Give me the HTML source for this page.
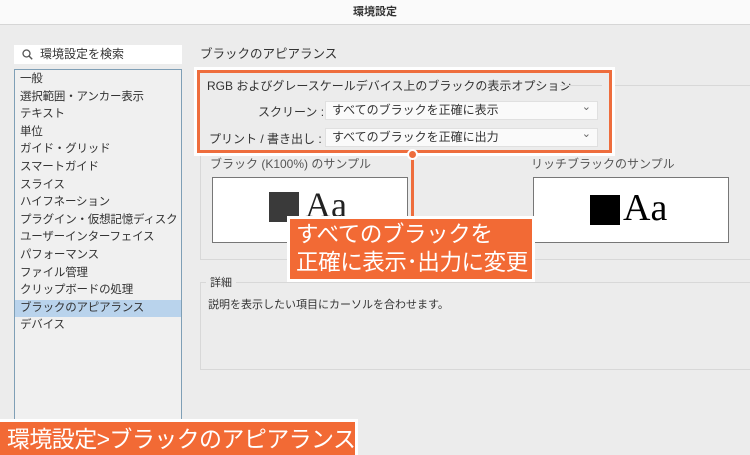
<!DOCTYPE html>
<html><head><meta charset="utf-8"><style>
*{margin:0;padding:0;box-sizing:border-box}
html,body{width:750px;height:455px;overflow:hidden}
body{background:#ececec;font-family:"Liberation Sans","Noto Sans CJK JP",sans-serif;color:#333;position:relative;font-size:12px}
.a{position:absolute;white-space:nowrap}
.title{left:0;top:0;width:750px;height:25px;background:#fafafa;border-bottom:1px solid #d6d6d6;text-align:center;line-height:25px;font-size:11px;font-weight:bold;color:#333}
.search{left:14px;top:45px;width:168px;height:19px;background:#fff;font-size:12px;line-height:19px;padding-left:26px;color:#333}
.list{left:14px;top:69px;width:168px;height:360px;background:#f0f0f0;border:1px solid #7f9fb6;overflow:hidden}
.list div{height:17.6px;line-height:17.6px;padding-left:5px;font-size:11.5px;color:#333;white-space:nowrap;letter-spacing:-0.2px}
.sel{background:#b9d3ec}
.grp{border:1px solid #d8d8d8;}
.dd{background:#fafafa;border:1px solid #e0e0e0;height:19px;line-height:17px;padding-left:6px;font-size:12px}
.dd:after{content:"⌄";position:absolute;right:6px;top:-3px;font-size:11px;color:#666}
.samp{background:#fff;border:1px solid #777}
.callout{background:#f26a35;color:#fff;border:3px solid #fff;font-size:22.5px;line-height:28px;padding-left:6px;letter-spacing:-0.4px;overflow:hidden}
</style></head><body>
<div class="a title">環境設定</div>
<div class="a search"><svg class="a" style="left:8px;top:4px" width="11" height="11" viewBox="0 0 11 11"><circle cx="4.5" cy="4.5" r="3.5" fill="none" stroke="#555" stroke-width="1.3"/><path d="M7 7l3.2 3.2" stroke="#555" stroke-width="1.4"/></svg>環境設定を検索</div>
<div class="a list" style="padding-top:1px">
<div>一般</div><div>選択範囲・アンカー表示</div><div>テキスト</div><div>単位</div><div>ガイド・グリッド</div><div>スマートガイド</div><div>スライス</div><div>ハイフネーション</div><div>プラグイン・仮想記憶ディスク</div><div>ユーザーインターフェイス</div><div>パフォーマンス</div><div>ファイル管理</div><div>クリップボードの処理</div><div class="sel">ブラックのアピアランス</div><div>デバイス</div>
</div>
<div class="a" style="left:200px;top:43px;font-size:12.5px">ブラックのアピアランス</div>
<div class="a grp" style="left:200px;top:85px;width:560px;height:175px"></div>
<div class="a grp" style="left:200px;top:282px;width:560px;height:88px"></div>
<div class="a" style="left:206px;top:274px;background:#ececec;padding:0 4px;font-size:11px">詳細</div>
<div class="a" style="left:208px;top:296px;font-size:11px">説明を表示したい項目にカーソルを合わせます。</div>
<div class="a" style="left:210px;top:155px;font-size:12px;color:#555">ブラック (K100%) のサンプル</div>
<div class="a samp" style="left:212px;top:177px;width:196px;height:66px"><div class="a" style="left:56px;top:14px;width:30px;height:30px;background:#3a3a3a"></div><div class="a" style="left:92px;top:6px;font-family:'Liberation Serif',serif;font-size:36px;color:#222">Aa</div></div>
<div class="a" style="left:531px;top:155px;font-size:12px;color:#555">リッチブラックのサンプル</div>
<div class="a samp" style="left:533px;top:177px;width:196px;height:66px"><div class="a" style="left:56px;top:17px;width:30px;height:30px;background:#000"></div><div class="a" style="left:89px;top:8px;font-family:'Liberation Serif',serif;font-size:38px;color:#000">Aa</div></div>
<div class="a" style="left:194px;top:67px;width:421px;height:89px;background:#fff"></div>
<div class="a" style="left:197px;top:70px;width:415px;height:83px;border:3px solid #ee6d3d;background:#ececec"></div>
<div class="a" style="left:207px;top:77px;font-size:12px">RGB およびグレースケールデバイス上のブラックの表示オプション</div>
<div class="a" style="left:560px;top:85px;width:42px;border-top:1px solid #d8d8d8"></div>
<div class="a" style="left:258px;top:103px;font-size:12px">スクリーン :</div>
<div class="a" style="left:209px;top:130px;font-size:12px">プリント / 書き出し :</div>
<div class="a dd" style="left:325px;top:101px;width:273px">すべてのブラックを正確に表示</div>
<div class="a dd" style="left:325px;top:128px;width:273px">すべてのブラックを正確に出力</div>
<div class="a" style="left:411px;top:152px;width:3px;height:68px;background:#ee6d3d"></div>
<div class="a" style="left:407px;top:149px;width:11px;height:11px;border-radius:50%;background:#ee6d3d;border:2px solid #fff"></div>
<div class="a callout" style="left:287px;top:216px;width:248px;height:66px;padding-top:2px">すべてのブラックを<br>正確に表示･出力に変更</div>
<div class="a callout" style="left:-3px;top:419px;width:361px;height:40px;font-size:23px;line-height:34px;padding-left:7px;letter-spacing:-0.6px">環境設定&gt;ブラックのアピアランス</div>
</body></html>
